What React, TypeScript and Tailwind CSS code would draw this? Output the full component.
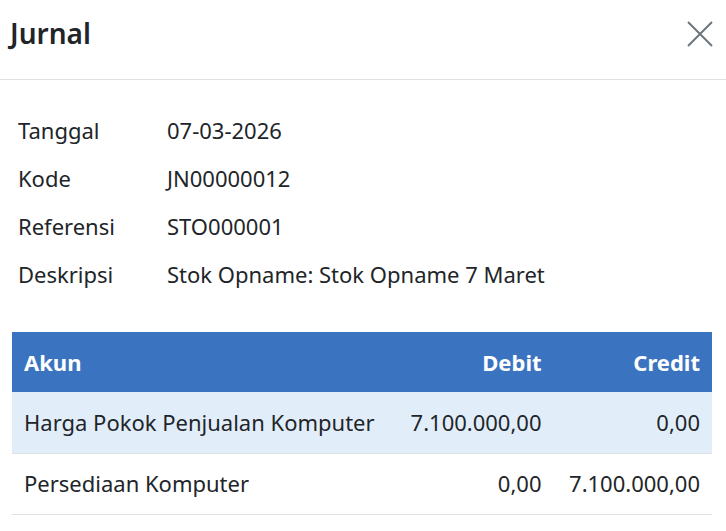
import React from "react";

export default function App() {
  const info = [
    { label: "Tanggal", value: "07-03-2026" },
    { label: "Kode", value: "JN00000012" },
    { label: "Referensi", value: "STO000001" },
    { label: "Deskripsi", value: "Stok Opname: Stok Opname 7 Maret" },
  ];

  const rows = [
    { akun: "Harga Pokok Penjualan Komputer", debit: "7.100.000,00", credit: "0,00" },
    { akun: "Persediaan Komputer", debit: "0,00", credit: "7.100.000,00" },
  ];

  return (
    <div
      className="w-[726px] h-[531px] bg-white text-[#212529] overflow-hidden"
      style={{ fontFamily: '"Noto Sans", "Open Sans", sans-serif' }}
    >
      <div className="h-[80px] flex items-center justify-between pl-[10px] pr-[12px] border-b border-[#dee2e6]">
        <h1 className="text-[28px] font-semibold leading-none -mt-[14px]">Jurnal</h1>
        <button className="text-[#6c757d] -mt-[12px]">
          <svg width="28" height="28" viewBox="0 0 28 28" fill="none" stroke="currentColor" strokeWidth="2">
            <path d="M2 2 L26 26 M26 2 L2 26" />
          </svg>
        </button>
      </div>

      <div className="pl-[12px] pr-[14px] pt-[26px]">
        <div className="px-[6px] flex flex-col">
          {info.map((i) => (
            <div key={i.label} className="flex h-[48px] items-center text-[22px] leading-none">
              <span className="w-[149px]">{i.label}</span>
              <span>{i.value}</span>
            </div>
          ))}
        </div>

        <table className="w-full mt-[34px] text-[22px] border-collapse">
          <thead>
            <tr className="bg-[#3a74c1] text-white h-[60px]">
              <th className="text-left font-bold px-[12px]">Akun</th>
              <th className="text-right font-bold px-[12px]">Debit</th>
              <th className="text-right font-bold px-[12px]">Credit</th>
            </tr>
          </thead>
          <tbody>
            {rows.map((r, idx) => (
              <tr
                key={r.akun}
                className={`h-[61px] border-b border-[#dee2e6] ${idx === 0 ? "bg-[#e1eefa]" : "bg-white"}`}
              >
                <td className="px-[12px]">{r.akun}</td>
                <td className="px-[12px] text-right">{r.debit}</td>
                <td className="px-[12px] text-right">{r.credit}</td>
              </tr>
            ))}
          </tbody>
        </table>
      </div>
    </div>
  );
}
